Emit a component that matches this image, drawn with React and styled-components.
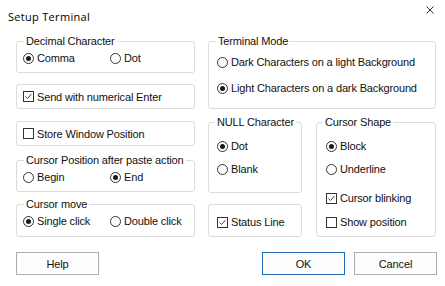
import React from "react";
import styled, { createGlobalStyle } from "styled-components";

const GlobalStyle = createGlobalStyle`
  html, body { margin: 0; padding: 0; background: #ffffff; }
  body { font-family: "Liberation Sans", Arial, sans-serif; }
`;

const Window = styled.div`
  width: 445px;
  height: 286px;
  background: #ffffff;
  display: flex;
  flex-direction: column;
  font-family: "Liberation Sans", Arial, sans-serif;
  font-size: 11px;
  letter-spacing: -0.15px;
  color: #111;
  overflow: hidden;
`;

const TitleBar = styled.div`
  height: 30px;
  display: flex;
  justify-content: space-between;
  align-items: flex-start;
`;

const Title = styled.div`
  margin: 9px 0 0 8px;
  font-family: "Open Sans", "Noto Sans", sans-serif;
  font-size: 11px;
  letter-spacing: 0.3px;
  line-height: 16px;
  color: #000;
`;

const CloseButton = styled.div`
  margin: 6px 11px 0 0;
  width: 8px;
  height: 8px;
  display: flex;
`;

const Body = styled.div`
  display: flex;
  gap: 13px;
  padding: 11px 0 0 16px;
`;

const Column = styled.div`
  display: flex;
  flex-direction: column;
  width: ${(p) => p.$w}px;
`;

const Row = styled.div`
  display: flex;
  gap: 14px;
  margin-top: ${(p) => p.$mt || 0}px;
`;

const SubColumn = styled.div`
  display: flex;
  flex-direction: column;
`;

const Group = styled.div`
  position: relative;
  box-sizing: border-box;
  width: ${(p) => (p.$w ? `${p.$w}px` : "100%")};
  height: ${(p) => p.$h}px;
  margin-top: ${(p) => p.$mt || 0}px;
  border: 1px solid #dcdcdc;
  border-radius: 3px;
  padding: ${(p) => (p.$center ? 0 : p.$pt || 0)}px 0 0 ${(p) => p.$pl ?? 6}px;
  display: flex;
  flex-direction: column;
  justify-content: ${(p) => (p.$center ? "center" : "flex-start")};
`;

const Legend = styled.div`
  position: absolute;
  top: -7px;
  left: ${(p) => p.$left ?? 7}px;
  padding: 0 2px;
  background: #ffffff;
  line-height: 13px;
  white-space: nowrap;
`;

const Options = styled.div`
  display: grid;
  grid-template-columns: 87px auto;
`;

const Option = styled.div`
  display: flex;
  align-items: center;
  gap: 3px;
  height: 14px;
  line-height: 14px;
  margin-top: ${(p) => p.$mt || 0}px;
  white-space: nowrap;
`;

const RadioMark = styled.span`
  width: 11px;
  height: 11px;
  box-sizing: border-box;
  border: 1px solid #333;
  border-radius: 50%;
  display: flex;
  align-items: center;
  justify-content: center;
  flex: none;
  &::after {
    content: "";
    width: 5px;
    height: 5px;
    border-radius: 50%;
    background: #1a1a1a;
    display: ${(p) => (p.$on ? "block" : "none")};
  }
`;

const CheckMark = styled.span`
  width: 11px;
  height: 11px;
  box-sizing: border-box;
  border: 1px solid #333;
  flex: none;
  display: flex;
  align-items: center;
  justify-content: center;
`;

const ButtonRow = styled.div`
  display: flex;
  margin-top: 15px;
  padding: 0 8px 0 16px;
  gap: 9px;
`;

const Button = styled.div`
  box-sizing: border-box;
  width: 83px;
  height: 23px;
  border: 1px solid ${(p) => (p.$primary ? "#2468b0" : "#adadad")};
  background: #fdfdfd;
  display: flex;
  align-items: center;
  justify-content: center;
  font-size: 11px;
  margin-left: ${(p) => (p.$push ? "auto" : "0")};
`;

const Radio = ({ on, children, mt }) => (
  <Option $mt={mt}>
    <RadioMark $on={on} />
    <span>{children}</span>
  </Option>
);

const Check = ({ on, children, mt }) => (
  <Option $mt={mt}>
    <CheckMark>
      {on && (
        <svg width="9" height="9" viewBox="0 0 9 9">
          <path d="M1.5 4.5 L3.5 6.5 L7.5 2" fill="none" stroke="#444" strokeWidth="1" />
        </svg>
      )}
    </CheckMark>
    <span>{children}</span>
  </Option>
);

export default function App() {
  return (
    <>
      <GlobalStyle />
      <Window>
        <TitleBar>
          <Title>Setup Terminal</Title>
          <CloseButton>
            <svg width="8" height="8" viewBox="0 0 8 8">
              <path d="M0.5 0.5 L7.5 7.5 M7.5 0.5 L0.5 7.5" stroke="#333" strokeWidth="1" />
            </svg>
          </CloseButton>
        </TitleBar>
        <Body>
          <Column $w={179}>
            <Group $h={32} $pt={9}>
              <Legend>Decimal Character</Legend>
              <Options>
                <Radio on>Comma</Radio>
                <Radio>Dot</Radio>
              </Options>
            </Group>
            <Group $h={25} $mt={11} $center>
              <Check on>Send with numerical Enter</Check>
            </Group>
            <Group $h={25} $mt={12} $center>
              <Check>Store Window Position</Check>
            </Group>
            <Group $h={32} $mt={14} $pt={9}>
              <Legend>Cursor Position after paste action</Legend>
              <Options>
                <Radio>Begin</Radio>
                <Radio on>End</Radio>
              </Options>
            </Group>
            <Group $h={33} $mt={12} $pt={9}>
              <Legend>Cursor move</Legend>
              <Options>
                <Radio on>Single click</Radio>
                <Radio>Double click</Radio>
              </Options>
            </Group>
          </Column>
          <Column $w={228}>
            <Group $h={68} $pt={13} $pl={8}>
              <Legend>Terminal Mode</Legend>
              <Radio>Dark Characters on a light Background</Radio>
              <Radio on mt={12}>Light Characters on a dark Background</Radio>
            </Group>
            <Row $mt={13}>
              <SubColumn>
                <Group $w={94} $h={71} $pt={16} $pl={8}>
                  <Legend $left={6}>NULL Character</Legend>
                  <Radio on>Dot</Radio>
                  <Radio mt={9}>Blank</Radio>
                </Group>
                <Group $w={94} $h={33} $mt={11} $pt={10} $pl={8}>
                  <Check on>Status Line</Check>
                </Group>
              </SubColumn>
              <Group $w={120} $h={115} $pt={16} $pl={9}>
                <Legend $left={6}>Cursor Shape</Legend>
                <Radio on>Block</Radio>
                <Radio mt={9}>Underline</Radio>
                <Check on mt={15}>Cursor blinking</Check>
                <Check mt={10}>Show position</Check>
              </Group>
            </Row>
          </Column>
        </Body>
        <ButtonRow>
          <Button>Help</Button>
          <Button $primary $push>OK</Button>
          <Button>Cancel</Button>
        </ButtonRow>
      </Window>
    </>
  );
}
